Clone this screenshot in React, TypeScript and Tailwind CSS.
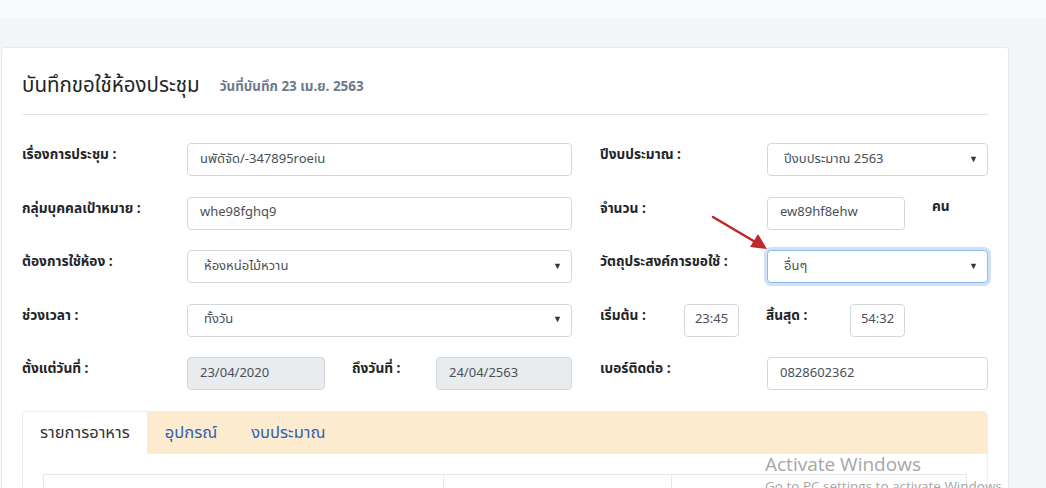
import React from "react";

const font = { fontFamily: '"Noto Sans Thai", "Noto Sans", "Liberation Sans", sans-serif' };

const Label = ({ children, className = "" }: any) => (
  <div className={`pt-[2px] text-[13.7px] font-bold text-[#212529] ${className}`}>{children}</div>
);

const Input = ({ value, className = "", disabled = false }: any) => (
  <div
    className={`flex h-[33px] items-center rounded-[4px] border border-[#d4d8dd] px-3 text-[13px] text-[#495057] ${
      disabled ? "bg-[#e9ecef]" : "bg-white"
    } ${className}`}
  >
    {value}
  </div>
);

const Select = ({ value, className = "", focused = false }: any) => (
  <div
    className={`flex h-[33px] items-center justify-between rounded-[4px] border bg-white pr-[9px] pl-4 text-[13px] text-[#495057] ${
      focused
        ? "border-[#8dbdf0] shadow-[0_0_0_3px_rgba(120,170,230,0.35)]"
        : "border-[#d4d8dd]"
    } ${className}`}
  >
    <span>{value}</span>
    <span className="text-[9px] text-[#333]">▼</span>
  </div>
);

export default function App() {
  return (
    <div className="relative h-[488px] w-[1046px] overflow-hidden bg-[#f4f5f8]" style={font}>
      <div className="h-[18px] bg-[#f9fafb]" />
      <div className="h-[29px]" />

      {/* card */}
      <div className="ml-px h-[460px] w-[1008px] rounded-[3px] border border-[#e8eaee] bg-white px-[20px]">
        {/* header */}
        <div className="flex items-end gap-[20px] border-b border-[#e3e5e8] pt-[25px] pb-[15px]">
          <h1 className="text-[20.5px] leading-[26px] text-[#212529]">บันทึกขอใช้ห้องประชุม</h1>
          <span className="pb-[2px] text-[13.4px] font-bold text-[#6c7a89]">วันที่บันทึก 23 เม.ย. 2563</span>
        </div>

        {/* form */}
        <div className="mt-[28px] flex flex-col gap-[20.5px]">
          <div className="flex">
            <Label className="w-[165px]">เรื่องการประชุม :</Label>
            <Input value="นพัดัจัด/-347895roeiu" className="w-[385px]" />
            <Label className="ml-[28px] w-[167px]">ปีงบประมาณ :</Label>
            <Select value="ปีงบประมาณ 2563" className="w-[221px]" />
          </div>

          <div className="flex">
            <Label className="w-[165px]">กลุ่มบุคคลเป้าหมาย :</Label>
            <Input value="whe98fghq9" className="w-[385px]" />
            <Label className="ml-[28px] w-[167px]">จำนวน :</Label>
            <Input value="ew89hf8ehw" className="w-[138px]" />
            <div className="ml-[27px] text-[13.7px] font-bold text-[#212529]">คน</div>
          </div>

          <div className="flex">
            <Label className="w-[165px]">ต้องการใช้ห้อง :</Label>
            <Select value="ห้องหน่อไม้หวาน" className="w-[385px]" />
            <Label className="ml-[28px] w-[167px]">วัตถุประสงค์การขอใช้ :</Label>
            <Select value="อื่นๆ" className="w-[221px]" focused />
          </div>

          <div className="flex">
            <Label className="w-[165px]">ช่วงเวลา :</Label>
            <Select value="ทั้งวัน" className="w-[385px]" />
            <Label className="ml-[28px] w-[84px]">เริ่มต้น :</Label>
            <Input value="23:45" className="w-[55px] justify-center px-0" />
            <Label className="ml-[27px] w-[84px]">สิ้นสุด :</Label>
            <Input value="54:32" className="w-[55px] justify-center px-0" />
          </div>

          <div className="flex">
            <Label className="w-[165px]">ตั้งแต่วันที่ :</Label>
            <Input value="23/04/2020" disabled className="w-[138px]" />
            <Label className="ml-[27px] w-[84px]">ถึงวันที่ :</Label>
            <Input value="24/04/2563" disabled className="w-[136px]" />
            <Label className="ml-[28px] w-[167px]">เบอร์ติดต่อ :</Label>
            <Input value="0828602362" className="w-[221px]" />
          </div>
        </div>

        {/* tabs */}
        <div className="mt-[21px] rounded-t-[4px] border border-[#eceef1]">
          <div className="flex h-[42px] items-stretch rounded-t-[4px] bg-[#fdebd0] text-[16.5px]">
            <div className="flex items-center rounded-tl-[4px] border-r border-[#eceef1] bg-white px-[17px] text-[#333]">
              รายการอาหาร
            </div>
            <div className="flex items-center px-[17px] text-[#2f5fb3]">อุปกรณ์</div>
            <div className="flex items-center px-[17px] text-[#2f5fb3]">งบประมาณ</div>
          </div>
          <div className="px-[20px] pt-[20px]">
            <div className="flex h-[40px] border-t border-l border-r border-[#e6e8eb]">
              <div className="w-[400px] border-r border-[#e6e8eb]" />
              <div className="w-[228px] border-r border-[#e6e8eb]" />
              <div className="flex-1" />
            </div>
          </div>
        </div>
      </div>

      {/* annotation arrow */}
      <svg className="absolute top-[210px] left-[705px]" width="70" height="45" viewBox="0 0 70 45">
        <line x1="8" y1="7" x2="52" y2="33" stroke="#c0272d" strokeWidth="2.5" strokeLinecap="round" />
        <polygon points="62,39 45,37 53,24" fill="#c0272d" />
      </svg>

      {/* windows watermark */}
      <div
        className="absolute top-[455px] left-[765px] leading-none text-[#a6a6a6]"
        style={{ fontFamily: '"Open Sans", "Liberation Sans", sans-serif' }}
      >
        <div className="text-[19px]">Activate Windows</div>
        <div className="mt-[6px] text-[13.5px] whitespace-nowrap">Go to PC settings to activate Windows.</div>
      </div>
    </div>
  );
}
